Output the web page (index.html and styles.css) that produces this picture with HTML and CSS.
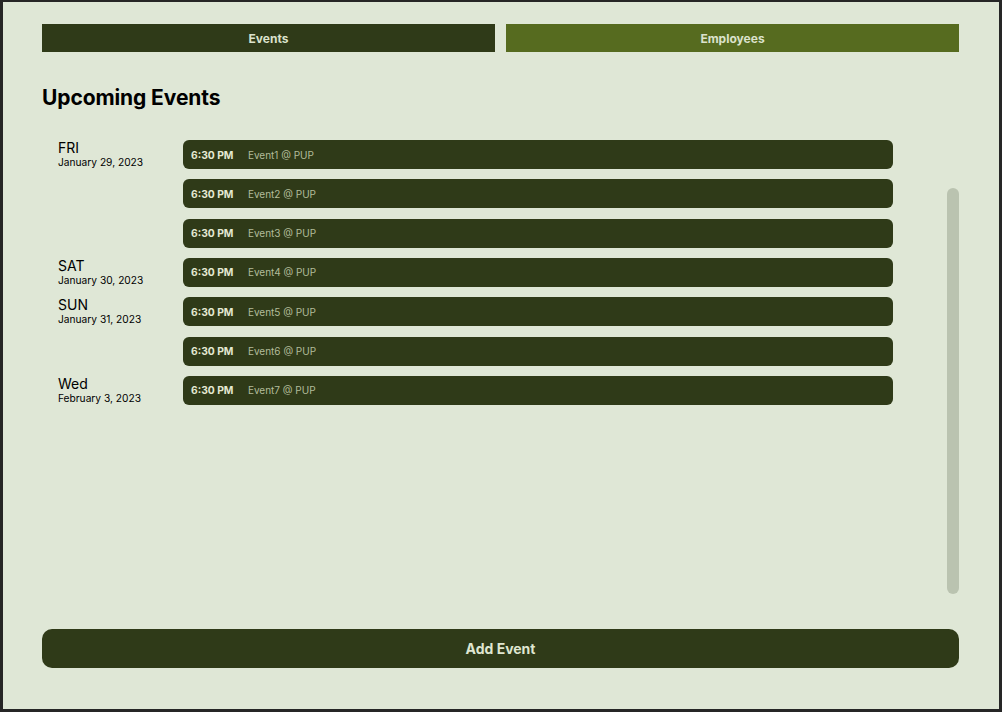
FILE: index.html
```html
<!DOCTYPE html>
<html lang="en">
<head>
<meta charset="utf-8">
<title>Upcoming Events</title>
<link rel="stylesheet" href="styles.css">
</head>
<body>
<div class="frame">
  <nav class="tabs">
    <button class="tab tab-events">Events</button>
    <button class="tab tab-employees">Employees</button>
  </nav>
  <h1 class="title">Upcoming Events</h1>
  <section class="list-area">
    <div class="list">
      <div class="day-group">
        <div class="day-label"><div class="day-name">FRI</div><div class="day-date">January 29, 2023</div></div>
        <div class="events">
          <div class="event"><span class="time">6:30 PM</span><span class="name">Event1 @ PUP</span></div>
          <div class="event"><span class="time">6:30 PM</span><span class="name">Event2 @ PUP</span></div>
          <div class="event"><span class="time">6:30 PM</span><span class="name">Event3 @ PUP</span></div>
        </div>
      </div>
      <div class="day-group">
        <div class="day-label"><div class="day-name">SAT</div><div class="day-date">January 30, 2023</div></div>
        <div class="events">
          <div class="event"><span class="time">6:30 PM</span><span class="name">Event4 @ PUP</span></div>
        </div>
      </div>
      <div class="day-group">
        <div class="day-label"><div class="day-name">SUN</div><div class="day-date">January 31, 2023</div></div>
        <div class="events">
          <div class="event"><span class="time">6:30 PM</span><span class="name">Event5 @ PUP</span></div>
          <div class="event"><span class="time">6:30 PM</span><span class="name">Event6 @ PUP</span></div>
        </div>
      </div>
      <div class="day-group">
        <div class="day-label"><div class="day-name">Wed</div><div class="day-date">February 3, 2023</div></div>
        <div class="events">
          <div class="event"><span class="time">6:30 PM</span><span class="name">Event7 @ PUP</span></div>
        </div>
      </div>
    </div>
    <div class="scrollbar"></div>
  </section>
  <button class="add-btn">Add Event</button>
</div>
</body>
</html>
```

FILE: styles.css
```css
* { box-sizing: border-box; }
html, body { margin: 0; padding: 0; }
body {
  font-family: Inter, "Noto Sans", sans-serif;
  background: #262626;
}
.frame {
  width: 1002px;
  height: 712px;
  background: #dfe7d6;
  border-style: solid;
  border-color: #262626;
  border-width: 2px 3px 3px 3px;
  padding: 22px 40px 41px 39px;
  display: flex;
  flex-direction: column;
}
.tabs {
  display: flex;
  gap: 11px;
  height: 28px;
}
.tab {
  flex: 1;
  border: none;
  margin: 0;
  padding: 0;
  font-family: Inter, sans-serif;
  font-weight: 700;
  font-size: 12px;
  color: #dbe2cc;
  cursor: pointer;
}
.tab-events { background: #2f3a18; }
.tab-employees { background: #566b1f; }
.title {
  margin: 33px 0 0 0;
  font-size: 21px;
  line-height: 26px;
  font-weight: 700;
  color: #000;
  letter-spacing: -0.1px;
}
.list-area {
  flex: 1;
  display: flex;
  margin-top: 29px;
  margin-bottom: 24px;
}
.list {
  flex: 1;
  padding-left: 16px;
  padding-right: 54px;
  display: flex;
  flex-direction: column;
  gap: 10.33px;
}
.day-group {
  display: flex;
}
.day-label {
  width: 125px;
  flex-shrink: 0;
  color: #000;
}
.day-name {
  font-size: 14px;
  line-height: 16px;
}
.day-date {
  font-size: 10.2px;
  line-height: 12px;
}
.events {
  flex: 1;
  display: flex;
  flex-direction: column;
  gap: 10.33px;
}
.event {
  height: 29px;
  background: #2f3a18;
  border-radius: 6px;
  display: flex;
  align-items: center;
  padding-left: 8px;
  gap: 14.5px;
  font-size: 10px;
}
.time {
  font-weight: 700;
  font-size: 10.3px;
  color: #e4e9d3;
}
.name {
  color: #b2bc9a;
}
.scrollbar {
  width: 12px;
  background: #bac3b0;
  border-radius: 6px;
  margin-top: 48px;
  margin-bottom: 11px;
}
.add-btn {
  height: 39px;
  border: none;
  border-radius: 10px;
  background: #2f3a18;
  color: #dfe6d0;
  font-family: Inter, sans-serif;
  font-weight: 700;
  font-size: 14px;
  cursor: pointer;
}
```
